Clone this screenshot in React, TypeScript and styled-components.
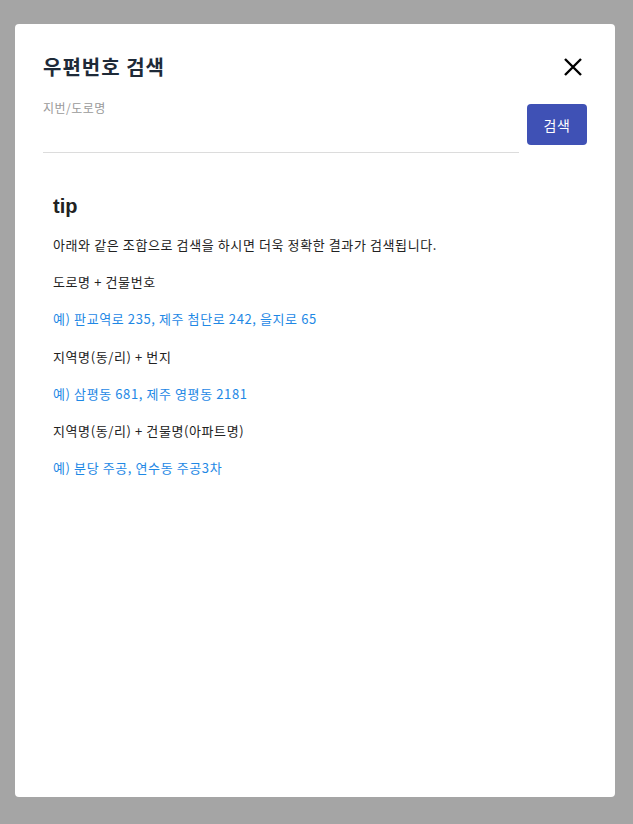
import React from "react";
import styled, { createGlobalStyle } from "styled-components";

const Global = createGlobalStyle`
  html, body { margin: 0; padding: 0; background: #a5a5a5; }
  body { font-family: "Noto Sans CJK KR", "Noto Sans", sans-serif; }
  * { box-sizing: border-box; }
`;

const Backdrop = styled.div`
  min-height: 824px;
  padding: 24px 18px 27px 15px;
  display: flex;
`;

const Modal = styled.div`
  flex: 1;
  height: 773px;
  background: #fff;
  border-radius: 4px;
  padding: 26px 28px 28px 28px;
  display: flex;
  flex-direction: column;
`;

const Header = styled.div`
  display: flex;
  align-items: center;
  justify-content: space-between;
  height: 32px;
`;

const Title = styled.h2`
  margin: 0;
  font-size: 20px;
  font-weight: 700;
  color: #1e2a38;
  letter-spacing: 1px;
`;

const CloseButton = styled.button`
  border: 0;
  background: none;
  padding: 0;
  width: 24px;
  height: 24px;
  margin-right: 2px;
  margin-top: 2px;
  display: flex;
  align-items: center;
  justify-content: center;
  cursor: pointer;
`;

const SearchRow = styled.div`
  display: flex;
  align-items: flex-start;
  gap: 8px;
  margin-top: 14px;
`;

const Field = styled.label`
  flex: 1;
  display: flex;
  flex-direction: column;
  border-bottom: 1px solid #dcdcdc;
  height: 57px;
  padding-top: 4px;
`;

const FieldLabel = styled.span`
  font-size: 12px;
  color: #9a9a9a;
  line-height: 16px;
  letter-spacing: 0.5px;
`;

const FieldInput = styled.input`
  border: 0;
  outline: none;
  font: inherit;
  font-size: 14px;
  padding: 6px 0;
  background: transparent;
`;

const SearchButton = styled.button`
  width: 60px;
  height: 41px;
  margin-top: 8px;
  border: 0;
  border-radius: 4px;
  background: #3f51b5;
  color: #fff;
  font-family: inherit;
  font-size: 14px;
  letter-spacing: 0.5px;
  cursor: pointer;
`;

const Tip = styled.div`
  padding: 39px 10px 0 10px;
`;

const TipTitle = styled.h3`
  margin: 0 0 6px 0;
  font-family: "Liberation Sans", Arial, sans-serif;
  font-size: 20px;
  font-weight: 700;
  color: #222;
  line-height: 28px;
`;

const Line = styled.p<{ $example?: boolean }>`
  margin: 0;
  font-size: 13px;
  line-height: 37.2px;
  letter-spacing: 0.6px;
  color: ${(p) => (p.$example ? "#1e88e5" : "#222")};
`;

const lines: { text: string; example?: boolean }[] = [
  { text: "아래와 같은 조합으로 검색을 하시면 더욱 정확한 결과가 검색됩니다." },
  { text: "도로명 + 건물번호" },
  { text: "예) 판교역로 235, 제주 첨단로 242, 을지로 65", example: true },
  { text: "지역명(동/리) + 번지" },
  { text: "예) 삼평동 681, 제주 영평동 2181", example: true },
  { text: "지역명(동/리) + 건물명(아파트명)" },
  { text: "예) 분당 주공, 연수동 주공3차", example: true },
];

export default function App() {
  return (
    <>
      <Global />
      <Backdrop>
        <Modal>
          <Header>
            <Title>우편번호 검색</Title>
            <CloseButton aria-label="닫기">
              <svg width="20" height="20" viewBox="0 0 20 20">
                <path d="M2 2 L18 18 M18 2 L2 18" stroke="#000" strokeWidth="2.4" fill="none" />
              </svg>
            </CloseButton>
          </Header>
          <SearchRow>
            <Field>
              <FieldLabel>지번/도로명</FieldLabel>
              <FieldInput />
            </Field>
            <SearchButton>검색</SearchButton>
          </SearchRow>
          <Tip>
            <TipTitle>tip</TipTitle>
            {lines.map((l, i) => (
              <Line key={i} $example={l.example}>
                {l.text}
              </Line>
            ))}
          </Tip>
        </Modal>
      </Backdrop>
    </>
  );
}
